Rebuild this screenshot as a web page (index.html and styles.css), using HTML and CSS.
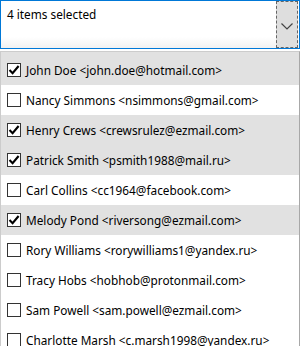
FILE: index.html
```html
<!DOCTYPE html>
<html>
<head>
<meta charset="utf-8">
<link rel="stylesheet" href="styles.css">
</head>
<body>
<div class="combo">
  <div class="field">4 items selected</div>
  <div class="drop">
    <svg width="12" height="7" viewBox="0 0 12 7"><path d="M0.5 0.5 L6 6 L11.5 0.5" fill="none" stroke="#444" stroke-width="1.2"/></svg>
  </div>
</div>
<div class="list">
  <div class="row sel first"><span class="cb on"><svg width="12" height="12" viewBox="0 0 12 12"><path d="M1.5 6 L4.6 9.2 L10.6 2" fill="none" stroke="#000" stroke-width="2.1"/></svg></span><span class="t">John Doe &lt;john.doe@hotmail.com&gt;</span></div>
  <div class="row"><span class="cb"></span><span class="t">Nancy Simmons &lt;nsimmons@gmail.com&gt;</span></div>
  <div class="row sel"><span class="cb on"><svg width="12" height="12" viewBox="0 0 12 12"><path d="M1.5 6 L4.6 9.2 L10.6 2" fill="none" stroke="#000" stroke-width="2.1"/></svg></span><span class="t">Henry Crews &lt;crewsrulez@ezmail.com&gt;</span></div>
  <div class="row sel"><span class="cb on"><svg width="12" height="12" viewBox="0 0 12 12"><path d="M1.5 6 L4.6 9.2 L10.6 2" fill="none" stroke="#000" stroke-width="2.1"/></svg></span><span class="t">Patrick Smith &lt;psmith1988@mail.ru&gt;</span></div>
  <div class="row"><span class="cb"></span><span class="t">Carl Collins &lt;cc1964@facebook.com&gt;</span></div>
  <div class="row sel"><span class="cb on"><svg width="12" height="12" viewBox="0 0 12 12"><path d="M1.5 6 L4.6 9.2 L10.6 2" fill="none" stroke="#000" stroke-width="2.1"/></svg></span><span class="t">Melody Pond &lt;riversong@ezmail.com&gt;</span></div>
  <div class="row"><span class="cb"></span><span class="t">Rory Williams &lt;rorywilliams1@yandex.ru&gt;</span></div>
  <div class="row"><span class="cb"></span><span class="t">Tracy Hobs &lt;hobhob@protonmail.com&gt;</span></div>
  <div class="row"><span class="cb"></span><span class="t">Sam Powell &lt;sam.powell@ezmail.com&gt;</span></div>
  <div class="row"><span class="cb"></span><span class="t">Charlotte Marsh &lt;c.marsh1998@yandex.ru&gt;</span></div>
</div>
</body>
</html>
```
FILE: styles.css
```css
html, body {
  margin: 0;
  padding: 0;
  background: #fff;
  overflow: hidden;
}
body {
  width: 300px;
  height: 346px;
  font-family: "Noto Sans", "Open Sans", sans-serif;
  font-size: 11.8px;
  color: #000;
}
.combo {
  box-sizing: border-box;
  height: 49px;
  border: 1px solid #0078d7;
  display: flex;
  background: linear-gradient(to bottom, #fff 0, #fff 36px, #f1f1f1 47px);
}
.field {
  flex: 1;
  padding: 5px 0 0 6px;
  line-height: 17px;
}
.drop {
  box-sizing: border-box;
  width: 22px;
  margin-right: 1px;
  border: 1px dashed #666;
  background: #dedede;
  display: flex;
  align-items: center;
  justify-content: center;
  padding-top: 4px;
}
.list {
  box-sizing: border-box;
  margin-top: 2px;
  height: 295px;
  border: 1px solid #cccccc;
  border-right-color: #a8a8a8;
  border-bottom: none;
}
.row {
  height: 30px;
  display: flex;
  align-items: center;
  padding-left: 6px;
}
.row.first {
  height: 33px;
  padding-top: 3px;
  box-sizing: border-box;
}
.row.sel {
  background: #e1e1e1;
}
.cb {
  box-sizing: border-box;
  width: 14px;
  height: 14px;
  border: 1px solid #333;
  background: #fff;
  display: flex;
  align-items: center;
  justify-content: center;
  flex: none;
}
.t {
  margin-left: 5px;
  white-space: nowrap;
}
```
